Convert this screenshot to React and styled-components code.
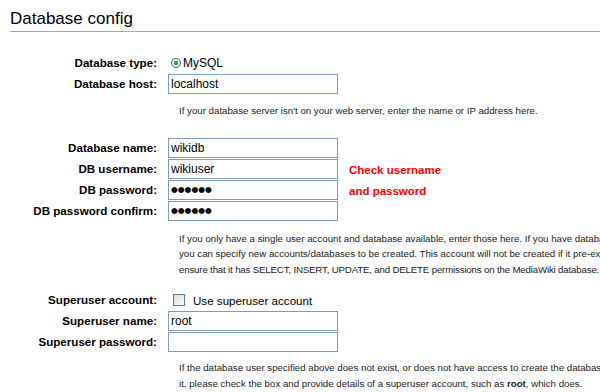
import React from "react";
import styled, { createGlobalStyle } from "styled-components";

const Global = createGlobalStyle`
  html, body { margin: 0; padding: 0; background: #fff; overflow: hidden; }
  body { font-family: "Liberation Sans", Arial, sans-serif; color: #000; }
`;

const Page = styled.div`
  width: 600px;
  height: 392px;
  overflow: hidden;
`;

const Heading = styled.h2`
  margin: 0 0 0 10px;
  padding: 9px 0 2px;
  font-size: 17px;
  line-height: 20px;
  font-weight: normal;
  border-bottom: 1px solid #aaa;
`;

const Section = styled.div`
  display: grid;
  grid-template-columns: 157px 170px auto;
  column-gap: 11px;
  row-gap: 1px;
  grid-auto-rows: 20px;
  margin-top: ${(p) => p.$top}px;
`;

const Label = styled.label`
  grid-column: 1;
  text-align: right;
  font-weight: bold;
  font-size: 11.6px;
  line-height: 20px;
  white-space: nowrap;
`;

const Field = styled.div`
  grid-column: 2 / span 2;
  display: flex;
  align-items: center;
  gap: ${(p) => p.$gap || 2}px;
  padding-left: ${(p) => p.$indent || 0}px;
  font-size: ${(p) => p.$size || 12}px;
  white-space: nowrap;
`;

const Input = styled.input`
  grid-column: 2;
  box-sizing: border-box;
  width: 170px;
  height: 20px;
  margin: 0;
  padding: 0 2px;
  border: 1px solid #7f9db9;
  font-family: "Liberation Sans", Arial, sans-serif;
  font-size: 12px;
  color: #000;
  background: #fff;
  outline: none;
`;

const Masked = styled(Input)`
  font-family: "DejaVu Sans", sans-serif;
  font-size: 7.8px;
  letter-spacing: 0;
`;

const Radio = styled.span`
  box-sizing: border-box;
  width: 10px;
  height: 10px;
  border-radius: 50%;
  border: 1px solid #2f5f8f;
  background: radial-gradient(circle, #2fa82f 0 2px, #e9edf0 2.5px, #fff 100%);
  margin-left: 3px;
`;

const Check = styled.span`
  box-sizing: border-box;
  width: 12px;
  height: 12px;
  border: 1px solid #5a7ea3;
  background: linear-gradient(135deg, #dcdcd6 0%, #f2f2ee 70%, #fff 100%);
`;

const Note = styled.div`
  grid-column: 3;
  grid-row: ${(p) => p.$row} / span 2;
  color: #f00;
  font-weight: bold;
  font-size: 11.5px;
  line-height: 21px;
  padding-top: 1px;
  white-space: nowrap;
`;

const Help = styled.p`
  margin: ${(p) => p.$top}px 0 0 179px;
  font-size: 9.7px;
  line-height: 15.5px;
  color: #222;
  white-space: nowrap;
`;

const Tight = styled.span`
  letter-spacing: -0.17px;
`;

export default function App() {
  return (
    <Page>
      <Global />
      <Heading>Database config</Heading>

      <Section $top={21}>
        <Label>Database type:</Label>
        <Field>
          <Radio />
          MySQL
        </Field>
        <Label>Database host:</Label>
        <Input defaultValue="localhost" />
      </Section>
      <Help $top={9}>
        If your database server isn't on your web server, enter the name or IP address here.
      </Help>

      <Section $top={19}>
        <Label>Database name:</Label>
        <Input defaultValue="wikidb" />
        <Label>DB username:</Label>
        <Input defaultValue="wikiuser" />
        <Note $row={2}>
          Check username
          <br />
          and password
        </Note>
        <Label>DB password:</Label>
        <Masked readOnly value="●●●●●●" />
        <Label>DB password confirm:</Label>
        <Masked readOnly value="●●●●●●" />
      </Section>
      <Help $top={10}>
        If you only have a single user account and database available, enter those here. If you have database administrator access,
        <br />
        you can specify new accounts/databases to be created. This account will not be created if it pre-exists. If this is the case,
        <br />
        <Tight>ensure that it has SELECT, INSERT, UPDATE, and DELETE permissions on the MediaWiki database.</Tight>
      </Help>

      <Section $top={13}>
        <Label>Superuser account:</Label>
        <Field $gap={8} $indent={5} $size={11.6}>
          <Check />
          Use superuser account
        </Field>
        <Label>Superuser name:</Label>
        <Input defaultValue="root" />
        <Label>Superuser password:</Label>
        <Input type="password" />
      </Section>
      <Help $top={8}>
        If the database user specified above does not exist, or does not have access to create the database (if needed) or grant access to
        <br />
        it, please check the box and provide details of a superuser account, such as <b>root</b>, which does.
      </Help>
    </Page>
  );
}
